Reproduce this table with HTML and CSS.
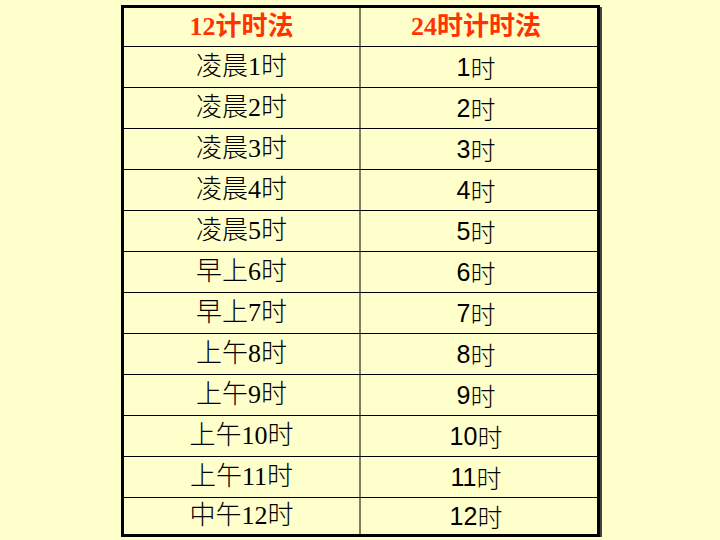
FILE: index.html
```html
<!DOCTYPE html>
<html lang="zh-CN">
<head>
<meta charset="utf-8">
<link rel="stylesheet" href="styles.css">
</head>
<body>
<div class="page">
  <div class="table">
    <div class="row head">
      <div class="cell left">12计时法</div>
      <div class="cell right">24时计时法</div>
    </div>
    <div class="row"><div class="cell left">凌晨1时</div><div class="cell right">1<span class="cjk">时</span></div></div>
    <div class="row"><div class="cell left">凌晨2时</div><div class="cell right">2<span class="cjk">时</span></div></div>
    <div class="row"><div class="cell left">凌晨3时</div><div class="cell right">3<span class="cjk">时</span></div></div>
    <div class="row"><div class="cell left">凌晨4时</div><div class="cell right">4<span class="cjk">时</span></div></div>
    <div class="row"><div class="cell left">凌晨5时</div><div class="cell right">5<span class="cjk">时</span></div></div>
    <div class="row"><div class="cell left">早上6时</div><div class="cell right">6<span class="cjk">时</span></div></div>
    <div class="row"><div class="cell left">早上7时</div><div class="cell right">7<span class="cjk">时</span></div></div>
    <div class="row"><div class="cell left">上午8时</div><div class="cell right">8<span class="cjk">时</span></div></div>
    <div class="row"><div class="cell left">上午9时</div><div class="cell right">9<span class="cjk">时</span></div></div>
    <div class="row"><div class="cell left">上午10时</div><div class="cell right">10<span class="cjk">时</span></div></div>
    <div class="row"><div class="cell left">上午11时</div><div class="cell right">11<span class="cjk">时</span></div></div>
    <div class="row last"><div class="cell left">中午12时</div><div class="cell right">12<span class="cjk">时</span></div></div>
  </div>
</div>
</body>
</html>
```
FILE: styles.css
```css
html, body {
  margin: 0;
  padding: 0;
  background: #ffffcc;
}
.page {
  padding: 5px 0 0 121px;
}
.table {
  width: 473px;
  border: 3px solid #000;
  box-shadow: 2px 2px 0 #444;
  display: flex;
  flex-direction: column;
}
.row {
  display: flex;
  height: 40px;
  border-bottom: 1px solid #000;
}
.row.head {
  height: 38px;
}
.row.last {
  height: 36px;
  border-bottom: none;
}
.cell {
  display: flex;
  align-items: center;
  justify-content: center;
  font-size: 26px;
  color: #000;
  line-height: 1;
}
.left {
  width: 235px;
  border-right: 2px solid #7f7f5f;
  font-family: "Liberation Serif", "Noto Sans CJK SC", serif;
  font-weight: 300;
}
.right {
  width: 236px;
  padding-right: 6px;
  box-sizing: border-box;
  font-size: 25px;
  font-family: "Liberation Sans", "Noto Sans CJK SC", sans-serif;
}
.cjk {
  font-family: "Noto Sans CJK SC", sans-serif;
  font-weight: 300;
}
.head .cell {
  color: #ff3300;
  font-weight: bold;
  font-size: 26px;
  font-family: "Liberation Serif", "Noto Sans CJK SC", serif;
}
```
